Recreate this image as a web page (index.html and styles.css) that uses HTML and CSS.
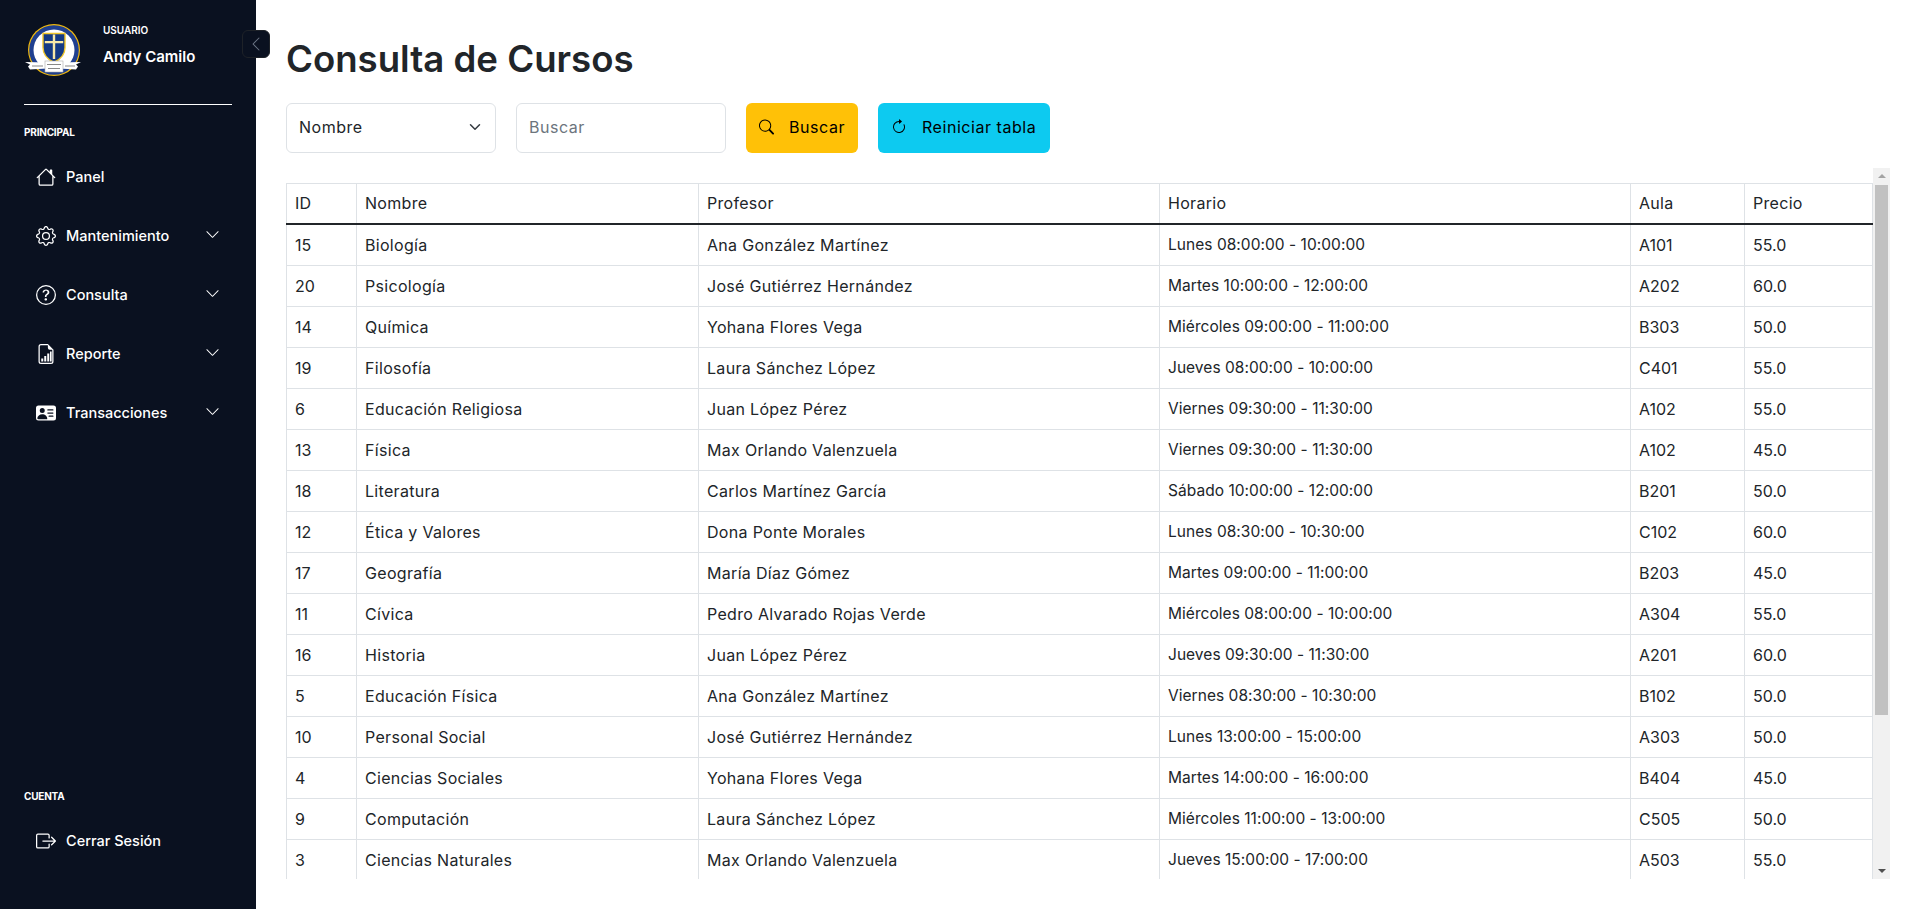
FILE: index.html
```html
<!DOCTYPE html>
<html lang="es">
<head>
    <meta charset="UTF-8">
    <meta name="viewport" content="width=device-width, initial-scale=1.0">
    <title>Consulta de Cursos</title>
    <link rel="stylesheet" href="styles.css">
</head>
<body>

    <aside class="sidebar">
        <div class="user">
            <svg class="logo" viewBox="0 0 58 52">
                <circle cx="30" cy="26" r="26" fill="#f0b90f"/>
                <circle cx="30" cy="26" r="24.800" fill="#1f3f8f"/>
                <circle cx="30" cy="26" r="20.500" fill="#fff"/>
                <path d="M19 9.500h22v14c0 7-5 12-11 15-6-3-11-8-11-15z" fill="#143a84" stroke="#f0c62a" stroke-width="1.400"/>
                <path d="M28.800 10.500h2.400v6.500h8v2.200h-8V35h-2.400V19.200h-8V17h8z" fill="#f7e9a8"/>
                <path d="M1 38l5 2.500-2 2 2 3 17-1v-6zM57 38l-5 2.500 2 2-2 3-17-1v-6z" fill="#fff"/>
                <rect x="21" y="37" width="18" height="11" fill="#fff" stroke="#aaa" stroke-width=".6"/>
                <path d="M23 40.500h14M24 44.500h12M8 42h11M41 42h10" stroke="#555" stroke-width=".7"/>
            </svg>
            <div class="user-text">
                <span class="user-label">USUARIO</span>
                <span class="user-name">Andy Camilo</span>
            </div>
        </div>
        <hr class="divider">

        <p class="section-label">PRINCIPAL</p>
        <nav class="menu">
            <a class="menu-item">
                <svg class="icon" viewBox="0 0 16 16"><path d="M8.707 1.500a1 1 0 0 0-1.414 0L.646 8.146a.5.5 0 0 0 .708.708L2 8.207V13.500A1.500 1.500 0 0 0 3.500 15h9a1.500 1.500 0 0 0 1.500-1.500V8.207l.646.647a.5.5 0 0 0 .708-.708L13 5.793V2.500a.5.5 0 0 0-.5-.5h-1a.5.5 0 0 0-.5.5v1.293L8.707 1.500ZM13 7.207V13.500a.5.5 0 0 1-.5.5h-9a.5.5 0 0 1-.5-.5V7.207l5-5 5 5Z"/></svg>
                <span>Panel</span>
            </a>
            <a class="menu-item">
                <svg class="icon" viewBox="0 0 16 16"><path d="M8 4.754a3.246 3.246 0 1 0 0 6.492 3.246 3.246 0 0 0 0-6.492zM5.754 8a2.246 2.246 0 1 1 4.492 0 2.246 2.246 0 0 1-4.492 0z"/><path d="M9.796 1.343c-.527-1.790-3.065-1.790-3.592 0l-.094.319a.873.873 0 0 1-1.255.52l-.292-.16c-1.640-.892-3.433.902-2.540 2.541l.159.292a.873.873 0 0 1-.52 1.255l-.319.094c-1.790.527-1.790 3.065 0 3.592l.319.094a.873.873 0 0 1 .52 1.255l-.16.292c-.892 1.640.901 3.434 2.541 2.540l.292-.159a.873.873 0 0 1 1.255.52l.094.319c.527 1.790 3.065 1.790 3.592 0l.094-.319a.873.873 0 0 1 1.255-.52l.292.16c1.640.893 3.434-.902 2.540-2.541l-.159-.292a.873.873 0 0 1 .52-1.255l.319-.094c1.790-.527 1.790-3.065 0-3.592l-.319-.094a.873.873 0 0 1-.52-1.255l.16-.292c.893-1.640-.902-3.433-2.541-2.540l-.292.159a.873.873 0 0 1-1.255-.52l-.094-.319zm-2.633.283c.246-.835 1.428-.835 1.674 0l.094.319a1.873 1.873 0 0 0 2.693 1.115l.291-.16c.764-.415 1.600.42 1.184 1.185l-.159.292a1.873 1.873 0 0 0 1.116 2.692l.318.094c.835.246.835 1.428 0 1.674l-.319.094a1.873 1.873 0 0 0-1.115 2.693l.16.291c.415.764-.42 1.600-1.185 1.184l-.291-.159a1.873 1.873 0 0 0-2.693 1.116l-.094.318c-.246.835-1.428.835-1.674 0l-.094-.319a1.873 1.873 0 0 0-2.692-1.115l-.292.16c-.764.415-1.600-.42-1.184-1.185l.159-.291A1.873 1.873 0 0 0 1.945 8.930l-.319-.094c-.835-.246-.835-1.428 0-1.674l.319-.094A1.873 1.873 0 0 0 3.060 4.377l-.16-.292c-.415-.764.42-1.600 1.185-1.184l.292.159a1.873 1.873 0 0 0 2.692-1.115l.094-.319z"/></svg>
                <span>Mantenimiento</span>
                <svg class="chevron" viewBox="0 0 16 16"><path d="M1.646 4.646a.5.5 0 0 1 .708 0L8 10.293l5.646-5.647a.5.5 0 0 1 .708.708l-6 6a.5.5 0 0 1-.708 0l-6-6a.5.5 0 0 1 0-.708z"/></svg>
            </a>
            <a class="menu-item">
                <svg class="icon" viewBox="0 0 16 16"><path d="M8 15A7 7 0 1 1 8 1a7 7 0 0 1 0 14zm0 1A8 8 0 1 0 8 0a8 8 0 0 0 0 16z"/><path d="M5.255 5.786a.237.237 0 0 0 .241.247h.825c.138 0 .248-.113.266-.25.090-.656.54-1.134 1.342-1.134.686 0 1.314.343 1.314 1.168 0 .635-.374.927-.965 1.371-.673.489-1.206 1.060-1.168 1.987l.003.217a.25.25 0 0 0 .25.246h.811a.25.25 0 0 0 .25-.25v-.105c0-.718.273-.927 1.010-1.486.609-.463 1.244-.977 1.244-2.056 0-1.511-1.276-2.241-2.673-2.241-1.267 0-2.655.59-2.750 2.286zm1.557 5.763c0 .533.425.927 1.010.927.609 0 1.028-.394 1.028-.927 0-.552-.42-.94-1.029-.94-.584 0-1.009.388-1.009.94z"/></svg>
                <span>Consulta</span>
                <svg class="chevron" viewBox="0 0 16 16"><path d="M1.646 4.646a.5.5 0 0 1 .708 0L8 10.293l5.646-5.647a.5.5 0 0 1 .708.708l-6 6a.5.5 0 0 1-.708 0l-6-6a.5.5 0 0 1 0-.708z"/></svg>
            </a>
            <a class="menu-item">
                <svg class="icon" viewBox="0 0 16 16"><path d="M14 14V4.500L9.500 0H4a2 2 0 0 0-2 2v12a2 2 0 0 0 2 2h8a2 2 0 0 0 2-2zM9.500 3A1.500 1.500 0 0 0 11 4.500h2V14a1 1 0 0 1-1 1H4a1 1 0 0 1-1-1V2a1 1 0 0 1 1-1h5.500v2z"/><path d="M4.200 11.500h1.600V14H4.200zM6.600 9.500h1.600V14H6.600zM9 7.500h1.600V14H9zM11.200 6h1.300v8h-1.300z"/></svg>
                <span>Reporte</span>
                <svg class="chevron" viewBox="0 0 16 16"><path d="M1.646 4.646a.5.5 0 0 1 .708 0L8 10.293l5.646-5.647a.5.5 0 0 1 .708.708l-6 6a.5.5 0 0 1-.708 0l-6-6a.5.5 0 0 1 0-.708z"/></svg>
            </a>
            <a class="menu-item">
                <svg class="icon" viewBox="0 0 16 16"><path d="M0 4a2 2 0 0 1 2-2h12a2 2 0 0 1 2 2v8a2 2 0 0 1-2 2H2a2 2 0 0 1-2-2V4Zm9 1.500a.5.5 0 0 0 .5.5h4a.5.5 0 0 0 0-1h-4a.5.5 0 0 0-.5.5ZM9 8a.5.5 0 0 0 .5.5h4a.5.5 0 0 0 0-1h-4A.5.5 0 0 0 9 8Zm1 2.500a.5.5 0 0 0 .5.5h3a.5.5 0 0 0 0-1h-3a.5.5 0 0 0-.5.5Zm-1 2C9 10.567 7.210 9 5 9c-2.086 0-3.800 1.398-3.984 3.181A1 1 0 0 0 2 13h6.960c.026-.163.04-.33.04-.5ZM7 6a2 2 0 1 0-4 0 2 2 0 0 0 4 0Z"/></svg>
                <span>Transacciones</span>
                <svg class="chevron" viewBox="0 0 16 16"><path d="M1.646 4.646a.5.5 0 0 1 .708 0L8 10.293l5.646-5.647a.5.5 0 0 1 .708.708l-6 6a.5.5 0 0 1-.708 0l-6-6a.5.5 0 0 1 0-.708z"/></svg>
            </a>
        </nav>

        <div class="account">
            <p class="section-label">CUENTA</p>
            <a class="menu-item">
                <svg class="icon" viewBox="0 0 16 16"><path d="M10 12.500a.5.5 0 0 1-.5.5h-8a.5.5 0 0 1-.5-.5v-9a.5.5 0 0 1 .5-.5h8a.5.5 0 0 1 .5.5v2a.5.5 0 0 0 1 0v-2A1.500 1.500 0 0 0 9.500 2h-8A1.500 1.500 0 0 0 0 3.500v9A1.500 1.500 0 0 0 1.500 14h8a1.500 1.500 0 0 0 1.500-1.500v-2a.5.5 0 0 0-1 0v2z"/><path d="M15.854 8.354a.5.5 0 0 0 0-.708l-3-3a.5.5 0 0 0-.708.708L14.293 7.500H5.500a.5.5 0 0 0 0 1h8.793l-2.147 2.146a.5.5 0 0 0 .708.708l3-3z"/></svg>
                <span>Cerrar Sesión</span>
            </a>
        </div>

        <button class="collapse-btn">
            <svg viewBox="0 0 16 16"><path d="M11.354 1.646a.5.5 0 0 1 0 .708L5.707 8l5.647 5.646a.5.5 0 0 1-.708.708l-6-6a.5.5 0 0 1 0-.708l6-6a.5.5 0 0 1 .708 0z"/></svg>
        </button>
    </aside>

    <main class="content">
        <h1 class="title">Consulta de Cursos</h1>

        <div class="filters">
            <div class="field select">
                <span>Nombre</span>
                <svg viewBox="0 0 16 16"><path d="M2 5l6 6 6-6" fill="none" stroke="#343a40" stroke-width="2" stroke-linecap="round" stroke-linejoin="round"/></svg>
            </div>
            <div class="field placeholder">Buscar</div>
            <button class="btn btn-search">
                <svg viewBox="0 0 16 16"><path d="M11.742 10.344a6.500 6.500 0 1 0-1.397 1.398h-.001c.03.04.062.078.098.115l3.850 3.850a1 1 0 0 0 1.415-1.414l-3.850-3.850a1.007 1.007 0 0 0-.115-.1zM12 6.500a5.500 5.500 0 1 1-11 0 5.500 5.500 0 0 1 11 0z"/></svg>
                Buscar
            </button>
            <button class="btn btn-reset">
                <svg viewBox="0 0 16 16"><path d="M8 3a5 5 0 1 0 4.546 2.914.5.5 0 0 1 .908-.417A6 6 0 1 1 8 2v1z"/><path d="M8 4.466V.534a.25.25 0 0 1 .41-.192l2.360 1.966c.12.1.12.284 0 .384L8.410 4.658A.25.25 0 0 1 8 4.466z"/></svg>
                Reiniciar tabla
            </button>
        </div>

        <div class="table-box">
            <div class="table-clip">
                <table class="courses">
                    <thead>
                        <tr>
                            <th class="c-id">ID</th>
                            <th class="c-name">Nombre</th>
                            <th class="c-teacher">Profesor</th>
                            <th class="c-time">Horario</th>
                            <th class="c-room">Aula</th>
                            <th>Precio</th>
                        </tr>
                    </thead>
                    <tbody>
                        <tr><td>15</td><td>Biología</td><td>Ana González Martínez</td><td>Lunes 08:00:00 - 10:00:00</td><td>A101</td><td>55.0</td></tr>
                        <tr><td>20</td><td>Psicología</td><td>José Gutiérrez Hernández</td><td>Martes 10:00:00 - 12:00:00</td><td>A202</td><td>60.0</td></tr>
                        <tr><td>14</td><td>Química</td><td>Yohana Flores Vega</td><td>Miércoles 09:00:00 - 11:00:00</td><td>B303</td><td>50.0</td></tr>
                        <tr><td>19</td><td>Filosofía</td><td>Laura Sánchez López</td><td>Jueves 08:00:00 - 10:00:00</td><td>C401</td><td>55.0</td></tr>
                        <tr><td>6</td><td>Educación Religiosa</td><td>Juan López Pérez</td><td>Viernes 09:30:00 - 11:30:00</td><td>A102</td><td>55.0</td></tr>
                        <tr><td>13</td><td>Física</td><td>Max Orlando Valenzuela</td><td>Viernes 09:30:00 - 11:30:00</td><td>A102</td><td>45.0</td></tr>
                        <tr><td>18</td><td>Literatura</td><td>Carlos Martínez García</td><td>Sábado 10:00:00 - 12:00:00</td><td>B201</td><td>50.0</td></tr>
                        <tr><td>12</td><td>Ética y Valores</td><td>Dona Ponte Morales</td><td>Lunes 08:30:00 - 10:30:00</td><td>C102</td><td>60.0</td></tr>
                        <tr><td>17</td><td>Geografía</td><td>María Díaz Gómez</td><td>Martes 09:00:00 - 11:00:00</td><td>B203</td><td>45.0</td></tr>
                        <tr><td>11</td><td>Cívica</td><td>Pedro Alvarado Rojas Verde</td><td>Miércoles 08:00:00 - 10:00:00</td><td>A304</td><td>55.0</td></tr>
                        <tr><td>16</td><td>Historia</td><td>Juan López Pérez</td><td>Jueves 09:30:00 - 11:30:00</td><td>A201</td><td>60.0</td></tr>
                        <tr><td>5</td><td>Educación Física</td><td>Ana González Martínez</td><td>Viernes 08:30:00 - 10:30:00</td><td>B102</td><td>50.0</td></tr>
                        <tr><td>10</td><td>Personal Social</td><td>José Gutiérrez Hernández</td><td>Lunes 13:00:00 - 15:00:00</td><td>A303</td><td>50.0</td></tr>
                        <tr><td>4</td><td>Ciencias Sociales</td><td>Yohana Flores Vega</td><td>Martes 14:00:00 - 16:00:00</td><td>B404</td><td>45.0</td></tr>
                        <tr><td>9</td><td>Computación</td><td>Laura Sánchez López</td><td>Miércoles 11:00:00 - 13:00:00</td><td>C505</td><td>50.0</td></tr>
                        <tr><td>3</td><td>Ciencias Naturales</td><td>Max Orlando Valenzuela</td><td>Jueves 15:00:00 - 17:00:00</td><td>A503</td><td>55.0</td></tr>
                    </tbody>
                </table>
            </div>
            <div class="scrollbar">
                <span class="arrow arrow-up"></span>
                <span class="thumb"></span>
                <span class="arrow arrow-down"></span>
            </div>
        </div>
    </main>

</body>
</html>
```

FILE: styles.css
```css
* {
    box-sizing: border-box;
}
body {
    display: flex;
    margin: 0;
    height: 909px;
    overflow: hidden;
    font-family: Inter, "Noto Sans", sans-serif;
    font-size: 16px;
    color: #212529;
    background-color: #fff;
}

/* sidebar */
.sidebar {
    position: relative;
    display: flex;
    flex-direction: column;
    flex: 0 0 256px;
    padding: 0 24px;
    background-color: #0a1120;
    color: #fff;
}
.user {
    display: flex;
    height: 104px;
    padding-top: 24px;
}
.logo {
    width: 58px;
    height: 52px;
    flex: none;
}
.user-text {
    display: flex;
    flex-direction: column;
    margin-left: 21px;
}
.user-label {
    margin-top: -2px;
    font-size: 10px;
    font-weight: 600;
    line-height: 16px;
}
.user-name {
    margin-top: 9px;
    font-size: 15px;
    font-weight: 600;
    line-height: 20px;
}
.divider {
    width: 208px;
    margin: 0;
    border: 0;
    border-top: 1px solid #fff;
}
.section-label {
    margin: 20px 0 0;
    font-size: 10px;
    font-weight: 700;
    letter-spacing: -.2px;
    line-height: 14px;
}
.menu {
    display: flex;
    flex-direction: column;
    margin-top: 8px;
}
.menu-item {
    display: flex;
    align-items: center;
    height: 59px;
    padding-left: 12px;
    font-size: 14.5px;
    font-weight: 500;
}
.icon {
    width: 20px;
    height: 20px;
    margin-right: 10px;
    fill: #fff;
}
.chevron {
    width: 15px;
    height: 15px;
    margin-left: auto;
    margin-right: 12px;
    margin-bottom: 2px;
    fill: #fff;
}
.account {
    margin-top: auto;
    padding-bottom: 39px;
}
.account .section-label {
    margin-bottom: 8px;
}
.collapse-btn {
    position: absolute;
    top: 30px;
    left: 242px;
    display: flex;
    justify-content: center;
    align-items: center;
    width: 28px;
    height: 28px;
    padding: 0;
    background-color: #0a1120;
    border: 1px solid #1e2228;
    border-radius: 6px;
}
.collapse-btn svg {
    width: 16px;
    height: 16px;
    fill: #6c7686;
}

/* main */
.content {
    display: flex;
    flex-direction: column;
    flex: 1;
    min-width: 0;
    padding: 38px 30px 30px;
}
.title {
    margin: 0;
    font-size: 36.600px;
    font-weight: 600;
    line-height: 43px;
    color: #212529;
}
.filters {
    display: flex;
    gap: 20px;
    margin-top: 22px;
}
.field {
    display: flex;
    align-items: center;
    justify-content: space-between;
    width: 210px;
    height: 50px;
    padding: 0 12px 2px;
    letter-spacing: .5px;
    background-color: #fff;
    border: 1px solid #dee2e6;
    border-radius: 6px;
}
.select svg {
    width: 12px;
    height: 12px;
    margin-right: 2px;
}
.placeholder {
    color: #6c757d;
}
.btn {
    display: flex;
    align-items: center;
    height: 50px;
    padding: 0 13px 2px;
    font-family: inherit;
    font-size: 16px;
    letter-spacing: .55px;
    color: #000;
    border: 0;
    border-radius: 6px;
}
.btn svg {
    width: 16px;
    height: 16px;
    margin-right: 15px;
}
.btn-search {
    width: 112px;
    background-color: #ffc107;
}
.btn-reset {
    width: 172px;
    white-space: nowrap;
    background-color: #0dcaf0;
}

/* table */
.table-box {
    display: flex;
    height: 711px;
    margin-top: 15px;
}
.table-clip {
    flex: 1;
    min-width: 0;
    padding-top: 15px;
    overflow: hidden;
}
.courses {
    width: 100%;
    table-layout: fixed;
    border-collapse: collapse;
    border: 1px solid #dee2e6;
}
.courses th, .courses td {
    height: 41px;
    padding: 8px;
    font-weight: 400;
    line-height: 24px;
    text-align: left;
    border: 1px solid #dee2e6;
}
.courses thead th {
    height: 40px;
    padding: 7px 8px;
    letter-spacing: .3px;
    border-bottom: 2px solid #212529;
}
.courses td:nth-child(2), .courses td:nth-child(3) {
    letter-spacing: .31px;
}
.courses td:nth-child(4) {
    font-size: 15.500px;
    letter-spacing: .04px;
}
.c-id { width: 70px; }
.c-name { width: 342px; }
.c-teacher { width: 461px; }
.c-time { width: 471px; }
.c-room { width: 114px; }

/* scrollbar is drawn since the browser hides its own */
.scrollbar {
    display: flex;
    flex-direction: column;
    align-items: center;
    flex: 0 0 17px;
    background-color: #f1f1f1;
}
.thumb {
    width: 13px;
    height: 530px;
    margin-top: 7px;
    background-color: #c1c1c1;
}
.arrow {
    width: 0;
    height: 0;
    border-left: 4px solid transparent;
    border-right: 4px solid transparent;
}
.arrow-up {
    margin-top: 6px;
    border-bottom: 4px solid #a3a3a3;
}
.arrow-down {
    margin-top: auto;
    margin-bottom: 6px;
    border-top: 4px solid #505050;
}
```
